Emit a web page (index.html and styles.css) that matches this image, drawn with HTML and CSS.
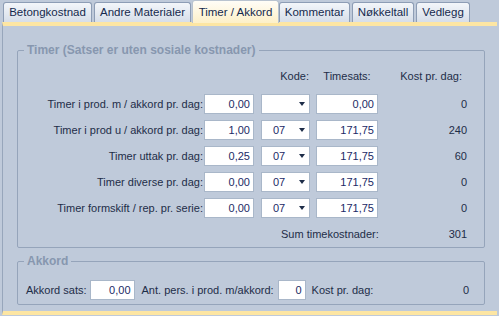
FILE: index.html
```html
<!DOCTYPE html>
<html>
<head>
<meta charset="utf-8">
<link rel="stylesheet" href="styles.css">
</head>
<body>
<div class="tabs">
  <div class="tab">Betongkostnad</div>
  <div class="tab">Andre Materialer</div>
  <div class="tab active">Timer / Akkord</div>
  <div class="tab">Kommentar</div>
  <div class="tab">Nøkkeltall</div>
  <div class="tab">Vedlegg</div>
</div>
<div class="panel">
  <fieldset class="group timer">
    <legend>Timer (Satser er uten sosiale kostnader)</legend>
    <div class="grid">
      <div></div><div></div>
      <div class="hdr hdr-kode">Kode:</div>
      <div class="hdr hdr-sats">Timesats:</div>
      <div class="hdr hdr-kost">Kost pr. dag:</div>

      <div class="lbl">Timer i prod. m / akkord pr. dag:</div>
      <div class="inp w50">0,00</div>
      <div class="combo"><span></span><i class="arrow"></i></div>
      <div class="inp w62">0,00</div>
      <div class="val">0</div>

      <div class="lbl">Timer i prod u / akkord pr. dag:</div>
      <div class="inp w50">1,00</div>
      <div class="combo"><span>07</span><i class="arrow"></i></div>
      <div class="inp w62">171,75</div>
      <div class="val">240</div>

      <div class="lbl">Timer uttak pr. dag:</div>
      <div class="inp w50">0,25</div>
      <div class="combo"><span>07</span><i class="arrow"></i></div>
      <div class="inp w62">171,75</div>
      <div class="val">60</div>

      <div class="lbl">Timer diverse pr. dag:</div>
      <div class="inp w50">0,00</div>
      <div class="combo"><span>07</span><i class="arrow"></i></div>
      <div class="inp w62">171,75</div>
      <div class="val">0</div>

      <div class="lbl">Timer formskift / rep. pr. serie:</div>
      <div class="inp w50">0,00</div>
      <div class="combo"><span>07</span><i class="arrow"></i></div>
      <div class="inp w62">171,75</div>
      <div class="val">0</div>

      <div></div><div></div>
      <div class="sum-lbl">Sum timekostnader:</div>
      <div class="val">301</div>
    </div>
  </fieldset>
  <fieldset class="group akkord">
    <legend>Akkord</legend>
    <div class="akk-row">
      <span class="lbl2">Akkord sats:</span>
      <div class="inp w45">0,00</div>
      <span class="lbl2 ant">Ant. pers. i prod. m/akkord:</span>
      <div class="inp w28">0</div>
      <span class="lbl2 kost">Kost pr. dag:</span>
      <span class="val akk-val">0</span>
    </div>
  </fieldset>
</div>
</body>
</html>
```
FILE: styles.css
```css
html, body {
  margin: 0;
  padding: 0;
}
body {
  width: 499px;
  height: 316px;
  background: #bfcada;
  font-family: "Liberation Sans", Arial, sans-serif;
  font-size: 11px;
  color: #1e2d48;
  overflow: hidden;
}
.tabs {
  display: flex;
  align-items: flex-end;
  height: 22px;
  padding-left: 3px;
}
.tab {
  flex: none;
  height: 20px;
  box-sizing: border-box;
  border: 1px solid #8d9db5;
  border-bottom: none;
  border-radius: 3px 3px 0 0;
  background: linear-gradient(#f3f6fa, #d6dee9);
  margin-right: 2px;
  font-size: 11.5px;
  line-height: 19px;
  text-align: center;
  white-space: nowrap;
  color: #15294d;
}
.tab:nth-child(1) { width: 89px; }
.tab:nth-child(2) { width: 97px; margin-right: 1px; }
.tab:nth-child(3) { width: 87px; margin-right: 0; }
.tab:nth-child(4) { width: 71px; }
.tab:nth-child(5) { width: 62px; }
.tab:nth-child(6) { width: 54px; }
.tab.active {
  height: 23px;
  margin-bottom: -1px;
  background: linear-gradient(#fffdf7, #fdf0c8);
  border-color: #b9c3cf;
  position: relative;
  z-index: 1;
  line-height: 22px;
}
.panel {
  margin-left: 2px;
  width: 495px;
  height: 293px;
  box-sizing: border-box;
  border-left: 1px solid #97a6bb;
  border-top: 4px solid #fde6a3;
  border-bottom: 4px solid #fde6a3;
  background: #bfcada;
  padding: 17px 12px 0 14px;
}
.group {
  margin: 0;
  border: 1px solid #95a4ba;
  border-radius: 2px;
  padding: 0;
  width: 468px;
  box-sizing: border-box;
}
.group legend {
  font-weight: bold;
  color: #8797af;
  font-size: 12px;
  padding: 0 3px;
  margin-left: 6px;
  line-height: 14px;
}
.timer {
  height: 205px;
}
.grid {
  display: grid;
  grid-template-columns: 186px 57px 55px 62px 89px;
  grid-auto-rows: 20px;
  row-gap: 6px;
  align-items: center;
  padding-top: 11px;
}
.hdr { line-height: 14px; }
.grid > .hdr { align-self: start; margin-top: 1px; }
.hdr-kode { text-align: right; padding-right: 7px; }
.hdr-sats { text-align: center; }
.hdr-kost { text-align: right; padding-right: 5px; }
.lbl { text-align: right; padding-right: 1px; white-space: nowrap; }
.val { text-align: right; }
.inp {
  height: 20px;
  box-sizing: border-box;
  background: #fff;
  border: 1px solid #a9b7c9;
  text-align: right;
  padding-right: 3px;
  line-height: 18px;
  color: #1b2a66;
}
.w50 { width: 50px; }
.w62 { width: 62px; }
.w45 { width: 45px; }
.w28 { width: 28px; }
.combo {
  width: 49px;
  height: 20px;
  box-sizing: border-box;
  background: #fff;
  border: 1px solid #a9b7c9;
  display: flex;
  align-items: center;
  justify-content: space-between;
  padding: 0 4px 0 11px;
  color: #1b2a66;
}
.arrow {
  width: 0;
  height: 0;
  border-left: 3px solid transparent;
  border-right: 3px solid transparent;
  border-top: 4px solid #1e2d48;
}
.sum-lbl {
  grid-column: 3 / span 2;
  padding-left: 20px;
  white-space: nowrap;
}
.akkord {
  margin-top: 6px;
  height: 51px;
}
.akk-row {
  display: flex;
  align-items: center;
  padding: 12px 15px 0 8px;
  height: 20px;
}
.lbl2 { white-space: nowrap; }
.akk-row .w45 { margin-left: 3px; }
.ant { margin-left: 7px; margin-right: 4px; }
.kost { margin-left: 6px; }
.akk-val { margin-left: auto; }
```
